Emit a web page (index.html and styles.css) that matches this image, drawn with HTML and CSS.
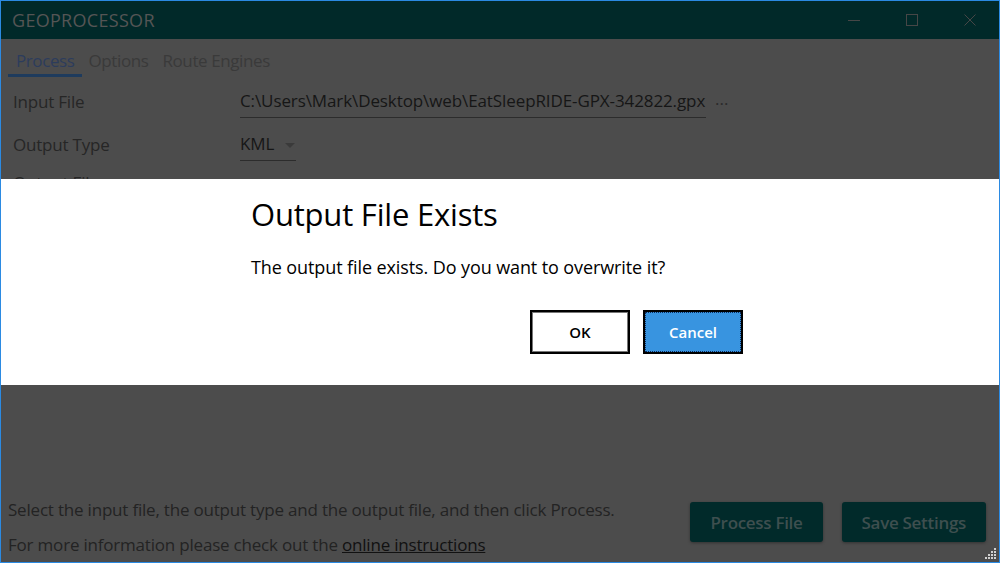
FILE: index.html
```html
<!DOCTYPE html>
<html>
<head>
<meta charset="utf-8">
<link rel="stylesheet" href="styles.css">
</head>
<body>
<div class="window">
  <div class="titlebar">
    <span class="app-title">GEOPROCESSOR</span>
    <div class="controls">
      <span class="ctl"><svg width="14" height="14" viewBox="0 0 14 14"><path d="M1 7.5H13" stroke="#464646" stroke-width="1"/></svg></span>
      <span class="ctl"><svg width="14" height="14" viewBox="0 0 14 14"><rect x="1.5" y="1.5" width="11" height="11" fill="none" stroke="#464646" stroke-width="1"/></svg></span>
      <span class="ctl"><svg width="14" height="14" viewBox="0 0 14 14"><path d="M1.5 1.5L12.5 12.5M12.5 1.5L1.5 12.5" stroke="#464646" stroke-width="1"/></svg></span>
    </div>
  </div>
  <div class="tabs">
    <span class="tab active">Process</span>
    <span class="tab">Options</span>
    <span class="tab">Route Engines</span>
  </div>
  <div class="form">
    <div class="row">
      <span class="label">Input File</span>
      <span class="field path">C:\Users\Mark\Desktop\web\EatSleepRIDE-GPX-342822.gpx</span>
      <span class="dots">...</span>
    </div>
    <div class="row">
      <span class="label">Output Type</span>
      <span class="field combo">KML<svg class="arrow" width="10" height="6" viewBox="0 0 10 6"><path d="M0 0H10L5 5Z" fill="#3a3a3a"/></svg></span>
    </div>
    <div class="row row-last">
      <span class="label">Output File</span>
      <span class="field path blank"></span>
    </div>
  </div>
  <div class="spacer"></div>
  <div class="footer">
    <div class="info">
      <p class="l1">Select the input file, the output type and the output file, and then click Process.</p>
      <p class="l2">For more information please check out the <a class="link">online instructions</a></p>
    </div>
    <div class="actions">
      <button class="action">Process File</button>
      <button class="action">Save Settings</button>
    </div>
  </div>
  <svg class="grip" width="12" height="12" viewBox="0 0 12 12">
    <g fill="#d0d0d0">
      <rect x="9" y="0" width="2" height="2"/>
      <rect x="6" y="3" width="2" height="2"/><rect x="9" y="3" width="2" height="2"/>
      <rect x="3" y="6" width="2" height="2"/><rect x="6" y="6" width="2" height="2"/><rect x="9" y="6" width="2" height="2"/>
      <rect x="0" y="9" width="2" height="2"/><rect x="3" y="9" width="2" height="2"/><rect x="6" y="9" width="2" height="2"/><rect x="9" y="9" width="2" height="2"/>
    </g>
  </svg>
  <div class="dialog">
    <div class="dialog-inner">
      <h1 class="dialog-title">Output File Exists</h1>
      <p class="dialog-msg">The output file exists. Do you want to overwrite it?</p>
      <div class="dialog-buttons">
        <button class="dbtn ok">OK</button>
        <button class="dbtn cancel">Cancel</button>
      </div>
    </div>
  </div>
</div>
</body>
</html>
```

FILE: styles.css
```css
* { box-sizing: border-box; }
html, body { margin: 0; padding: 0; }
body {
  width: 1000px;
  height: 563px;
  overflow: hidden;
  font-family: "Open Sans", "Noto Sans", sans-serif;
  background: #4c4c4c;
}
.window {
  position: relative;
  width: 1000px;
  height: 563px;
  border: 1px solid #2b8ae2;
  background: #4c4c4c;
  display: flex;
  flex-direction: column;
}
.titlebar {
  height: 38px;
  background: #012929;
  display: flex;
  align-items: center;
  justify-content: space-between;
  padding-left: 11px;
}
.app-title {
  color: #555;
  font-size: 18px;
  letter-spacing: 0.3px;
}
.controls { display: flex; height: 100%; }
.ctl {
  width: 58px;
  display: flex;
  align-items: center;
  justify-content: center;
}
.tabs {
  display: flex;
  padding-left: 7px;
  height: 38px;
  align-items: stretch;
}
.tab {
  font-size: 17px;
  color: #3a3a3a;
  padding: 10px 7px 0 7px;
  letter-spacing: -0.4px;
}
.tab.active {
  color: #2c3c5c;
  border-bottom: 3px solid #1e3b5d;
  padding-left: 8px;
  padding-right: 7px;
}
.form {
  display: flex;
  flex-direction: column;
  padding-left: 12px;
}
.row {
  display: flex;
  align-items: flex-start;
  height: 43px;
  padding-top: 5px;
}
.row-last .label { padding-top: 3px; }
.label {
  width: 227px;
  font-size: 17px;
  color: #262626;
  letter-spacing: -0.2px;
  padding-top: 8px;
}
.field {
  font-size: 17px;
  color: #161616;
  border-bottom: 1px solid #2c2c2c;
  height: 36px;
  padding-top: 7px;
  letter-spacing: -0.1px;
}
.path { width: 466px; }
.blank { border-bottom: none; }
.combo {
  width: 56px;
  display: flex;
  align-items: flex-start;
}
.arrow { margin-left: 11px; margin-top: 11px; }
.dots {
  font-size: 17px;
  color: #2a2a2a;
  margin-left: 9px;
  padding-top: 5px;
}
.spacer { flex: 1; }
.footer {
  display: flex;
  justify-content: space-between;
  align-items: flex-start;
  padding: 0 13px 0 7px;
}
.info p {
  margin: 0;
  font-size: 17px;
  color: #232323;
  letter-spacing: -0.2px;
}
.info .l1 { line-height: 36px; }
.info .l2 { line-height: 34px; }
.link {
  color: #111;
  text-decoration: underline;
}
.actions {
  display: flex;
  gap: 19px;
  padding-top: 10px;
}
.action {
  font-family: inherit;
  background: #012a2a;
  color: #3e4f4f;
  border: none;
  border-radius: 3px;
  height: 40px;
  font-size: 17px;
  font-weight: 600;
  letter-spacing: -0.3px;
  padding: 0 20px;
  box-shadow: 0 1px 3px rgba(0,0,0,0.35);
}
.grip {
  position: absolute;
  right: 2px;
  bottom: 2px;
}
.dialog {
  position: absolute;
  left: 0;
  right: 0;
  top: 178px;
  height: 206px;
  background: #fff;
}
.dialog-inner {
  width: 498px;
  margin-left: 250px;
  padding-top: 15px;
}
.dialog-title {
  margin: 0;
  font-weight: 400;
  font-size: 31px;
  color: #000;
  letter-spacing: -0.2px;
  line-height: 40px;
}
.dialog-msg {
  margin: 0;
  margin-top: 21px;
  font-size: 18px;
  color: #000;
  letter-spacing: -0.1px;
}
.dialog-buttons {
  display: flex;
  justify-content: flex-end;
  gap: 13px;
  margin-top: 31px;
  padding-right: 6px;
}
.dbtn {
  font-family: inherit;
  width: 100px;
  height: 44px;
  font-size: 15px;
  font-weight: 600;
  border: 2px solid #000;
}
.ok {
  background: #fff;
  color: #000;
  box-shadow: inset 0 0 0 1px #777;
}
.cancel {
  background: #3894e0;
  color: #fff;
  outline: 1px dotted #0b2b5a;
  outline-offset: -3px;
}
```
